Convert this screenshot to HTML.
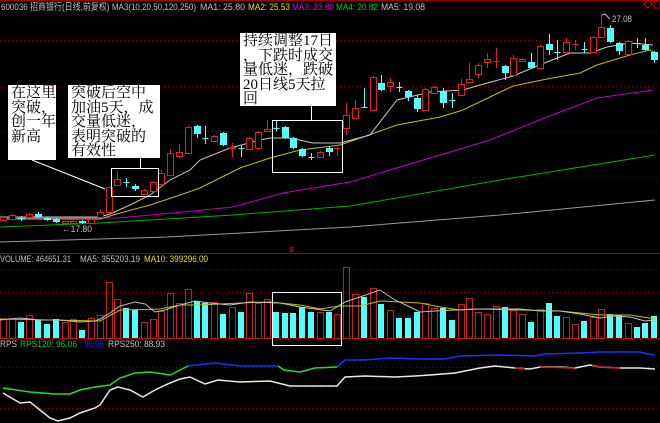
<!DOCTYPE html>
<html><head><meta charset="utf-8">
<style>
html,body{margin:0;padding:0;background:#000;width:660px;height:423px;overflow:hidden}
svg{display:block}
.t{font-family:"Liberation Sans",sans-serif;font-size:9.5px}
.box{position:absolute;background:#fff;color:#000;font-family:"Liberation Serif","Noto Serif CJK SC",serif;font-size:15px;line-height:14.6px;padding:1px 0 0 3px;box-sizing:border-box;white-space:pre}
</style></head><body>
<div style="position:relative;width:660px;height:423px">
<svg id="s" width="660" height="423" xmlns="http://www.w3.org/2000/svg"></svg>
<div class="box" style="left:8px;top:85px;width:48px;height:75px">在这里
突破，
创一年
新高</div>
<div class="box" style="left:68px;top:85px;width:92px;height:73px">突破后空中
加油5天，成
交量低迷，
表明突破的
有效性</div>
<div class="box" style="left:240px;top:33px;width:96px;height:73px">持续调整17日
，下跌时成交
量低迷，跌破
20日线5天拉
回</div>
</div>
<script>
var S='';
function L(pts,c,w){S+='<polyline fill="none" stroke="'+c+'" stroke-width="'+(w||1)+'" points="'+pts+'"/>';}
function T(x,y,t,c,extra,len){S+='<text class="t" x="'+x+'" y="'+y+'" fill="'+c+'" '+(extra||'')+(len?' textLength="'+len+'" lengthAdjust="spacingAndGlyphs"':'')+'>'+t+'</text>';}
S+='<line x1="0" y1="0.5" x2="660" y2="0.5" stroke="#a00000"/>';
S+='<line x1="0" y1="253.5" x2="660" y2="253.5" stroke="#a00000"/>';
S+='<line x1="0" y1="338.5" x2="660" y2="338.5" stroke="#a00000"/>';
[40,86,131,177,269,292,315,367,387,408].forEach(function(y){S+='<line x1="0" y1="'+(y+.5)+'" x2="660" y2="'+(y+.5)+'" stroke="#800000" stroke-dasharray="1,3"/>';});
L('0,242 167,237 350,227 500,215 655,200','#9a9a9a');
L('0,227 100,223 233,215 350,206 500,180 655,155','#00b000');
L('0,218 117,218 173,213 233,207 283,193 350,182 490,140 547,117 597,98 653,90','#c000c0');
L('0,219 100,219 120,213 150,205 180,195 200,188 240,168 270,158 300,150 340,145 363,137 397,125 440,117 463,110 490,97 513,86 547,79 580,73 597,65 630,55 650,50 655,53','#c0c000');
L('0,217 100,217 110,214 130,205 150,195 170,180 190,170 200,160 230,148 260,140 270,138 290,138 313,143 340,143 370,135 397,100 430,92 463,90 480,85 513,76 547,62 570,53 590,53 607,47 630,43 653,45','#c8c8c8');
var C=[[1,217,220,216,221],[1,215,219,214,220],[0,218,219,216,221],[1,214,217,213,218],[0,214,217,212,218],[0,218,220,217,221],[0,219,222,218,223],[1,221,223,220,224],[1,221,223,220,224],[0,221,223,220,224],[1,219,223,218,224],[1,212,217,209,218],[1,187,212,187,212],[1,179,185,171,185],[0,182,182,178,187],[0,186,189,184,191],[1,190,194,189,195],[1,182,191,181,192],[1,173,184,170,185],[1,153,175,149,176],[1,152,156,144,158],[1,127,153,126,154],[0,126,134,125,138],[0,138,138,126,144],[1,136,141,135,142],[0,133,145,132,146],[1,147,148,143,157],[0,148,148,145,157],[1,138,149,137,150],[1,132,148,131,149],[1,129,131,120,132],[0,128,128,120,131],[0,127,138,126,139],[0,138,148,137,149],[0,149,156,148,157],[0,157,157,153,160],[1,152,157,151,158],[0,148,152,146,156],[1,148,148,147,156],[1,115,128,103,135],[1,108,118,100,119],[0,107,107,88,108],[1,77,110,76,111],[0,83,90,75,91],[1,82,86,78,92],[0,87,87,82,92],[0,91,97,90,101],[0,98,109,95,112],[1,89,110,88,111],[1,87,93,86,94],[0,91,103,88,108],[0,100,100,93,108],[1,84,95,79,96],[1,79,82,63,83],[1,65,74,63,78],[1,59,62,53,68],[1,61,61,48,68],[0,66,73,65,80],[1,58,75,55,76],[1,59,61,58,62],[0,62,68,53,69],[1,46,68,45,69],[0,44,50,34,55],[0,52,52,40,60],[1,42,52,38,53],[1,44,44,40,50],[0,49,49,42,53],[1,37,52,36,53],[1,27,37,15,38],[0,28,42,25,43],[0,43,51,42,55],[1,41,54,40,55],[0,43,43,38,48],[0,45,50,38,51],[0,52,60,51,63]];
C.forEach(function(c,i){var x=Math.round(3+8.8*i)+.5,col=c[0]?'#e02020':'#50ffff';
S+='<line x1="'+x+'" y1="'+c[3]+'" x2="'+x+'" y2="'+c[4]+'" stroke="'+col+'"/>';
var h=Math.max(c[2]-c[1],0);
if(h<1){S+='<line x1="'+(x-3)+'" y1="'+(c[1]+.5)+'" x2="'+(x+3)+'" y2="'+(c[1]+.5)+'" stroke="'+col+'"/>';}
else if(c[0]){S+='<rect x="'+(x-3)+'" y="'+(c[1]+.5)+'" width="6" height="'+h+'" fill="#000" stroke="'+col+'"/>';}
else{S+='<rect x="'+(x-3.5)+'" y="'+c[1]+'" width="7" height="'+h+'" fill="'+col+'"/>';}
});
S+='<line x1="32" y1="160" x2="105" y2="189" stroke="#fff"/>';
S+='<line x1="140.5" y1="158" x2="140.5" y2="168" stroke="#fff"/>';
S+='<rect x="111.5" y="168.5" width="47" height="28" fill="none" stroke="#fff"/>';
S+='<line x1="311.5" y1="106" x2="311.5" y2="120" stroke="#fff"/>';
S+='<rect x="272.5" y="120.5" width="70" height="52" fill="none" stroke="#fff"/>';
S+='<polyline fill="none" stroke="#c0c0c0" points="602,15 605,14 610,19"/>';
T(612,22,'27.08','#c0c0c0','',20);
T(62,232,'←17.80','#c0c0c0','',30);
T(289,252,'s','#e00000','font-weight="bold"');
S+='<path d="M644,4 l4,-4 4,4 -4,4z" fill="none" stroke="#e00000"/><rect x="654" y="1" width="6" height="7" fill="none" stroke="#e00000"/>';
T(1,10,'600036 招商银行(日线,前复权) MA3(10,20,50,120,250)','#c0c0c0','style="font-family:\'Liberation Sans\',\'Noto Sans CJK SC\',sans-serif"',195);
T(200,10,'MA1: 25.80','#c0c0c0','',45);T(248,10,'MA2: 25.53','#e0e000','',42);T(292,10,'MA3: 23.80','#e000e0','',42);T(336,10,'MA4: 20.82','#00d000','',42);T(381,10,'MA5: 19.08','#c0c0c0','',44);
T(0,262,'VOLUME: 464651.31','#c0c0c0','',71);T(80,262,'MA5: 355203.19','#c0c0c0','',60);T(144,262,'MA10: 399296.00','#e0e000','',64);
var V=[319,318,322,315,320,324,319,322,319,330,318,315,282,299,308,310,322,319,311,293,303,289,301,303,302,314,307,312,293,303,299,312,313,313,307,312,312,312,314,267,294,297,288,304,310,318,318,312,303,308,308,320,304,298,312,314,306,307,310,314,322,309,303,316,317,324,321,317,309,314,315,323,327,323,316];
V.forEach(function(v,i){var x=Math.round(3+8.8*i),red=C[i][0];
if(red)S+='<rect x="'+(x-2.5)+'" y="'+(v+.5)+'" width="6" height="'+(338-v)+'" fill="none" stroke="#c02020"/>';
else S+='<rect x="'+(x-3)+'" y="'+v+'" width="6" height="'+(338-v)+'" fill="#50ffff"/>';});
L('0,319 100,321 120,310 160,309 180,305 200,305 220,304 240,303 270,302 300,305 320,309 340,306 360,306 380,301 420,303 440,307 460,310 480,309 520,310 560,311 600,315 630,315 655,319','#c0c000');
L('0,320 20,318 40,320 60,320 80,322 95,321 100,319 110,313 120,306 135,302 145,304 155,312 165,310 180,305 195,301 210,303 230,305 250,302 280,303 300,307 330,311 345,302 360,297 380,290 395,300 410,307 420,312 435,311 475,309 520,309 540,311 560,311 580,314 600,318 615,316 630,317 645,321 655,320','#c0c0c0');
S+='<rect x="272.5" y="292.5" width="69" height="53" fill="none" stroke="#fff"/>';
T(0,347,'RPS','#c0c0c0','',17);T(20,347,'RPS120: 96.06','#00d000','',57);T(80,347,': 96.06','#2020ff','',24);T(108,347,'RPS250: 88.93','#c0c0c0','',57);
L('3,388 30,392 55,394 70,394 80,390 95,387 110,385 120,378 135,373 150,372 170,375 188,366','#20e020',1.5);
L('188,366 215,363 240,366 260,366 278,366','#2030ff',1.5);
L('278,366 284,370 300,372 315,368 337,367','#20e020',1.5);
L('337,367 345,360 365,360 390,358 420,359 445,359 460,356 500,355 535,356 545,354 580,353 600,352 640,352 648,354 655,355','#2030ff',1.5);
L('3,393 20,403 30,402 40,410 50,418 58,421 70,418 80,413 95,408 100,405 110,390 118,387 130,390 143,397 155,390 170,383 180,379 190,377 205,384 218,380 240,382 270,381 290,386 337,386 345,377 365,376 395,377 415,376 430,375 455,373 480,368 495,366 515,368 530,369 540,367 560,367 575,368 590,365 600,367 620,368 640,368 655,369','#e8e8e8',1.5);
L('515,368 525,369','#e02020',1.5);L('540,367 575,368','#e02020',1.5);L('592,365 600,367 620,368','#e02020',1.5);
document.getElementById('s').innerHTML=S;
</script>
</body></html>
